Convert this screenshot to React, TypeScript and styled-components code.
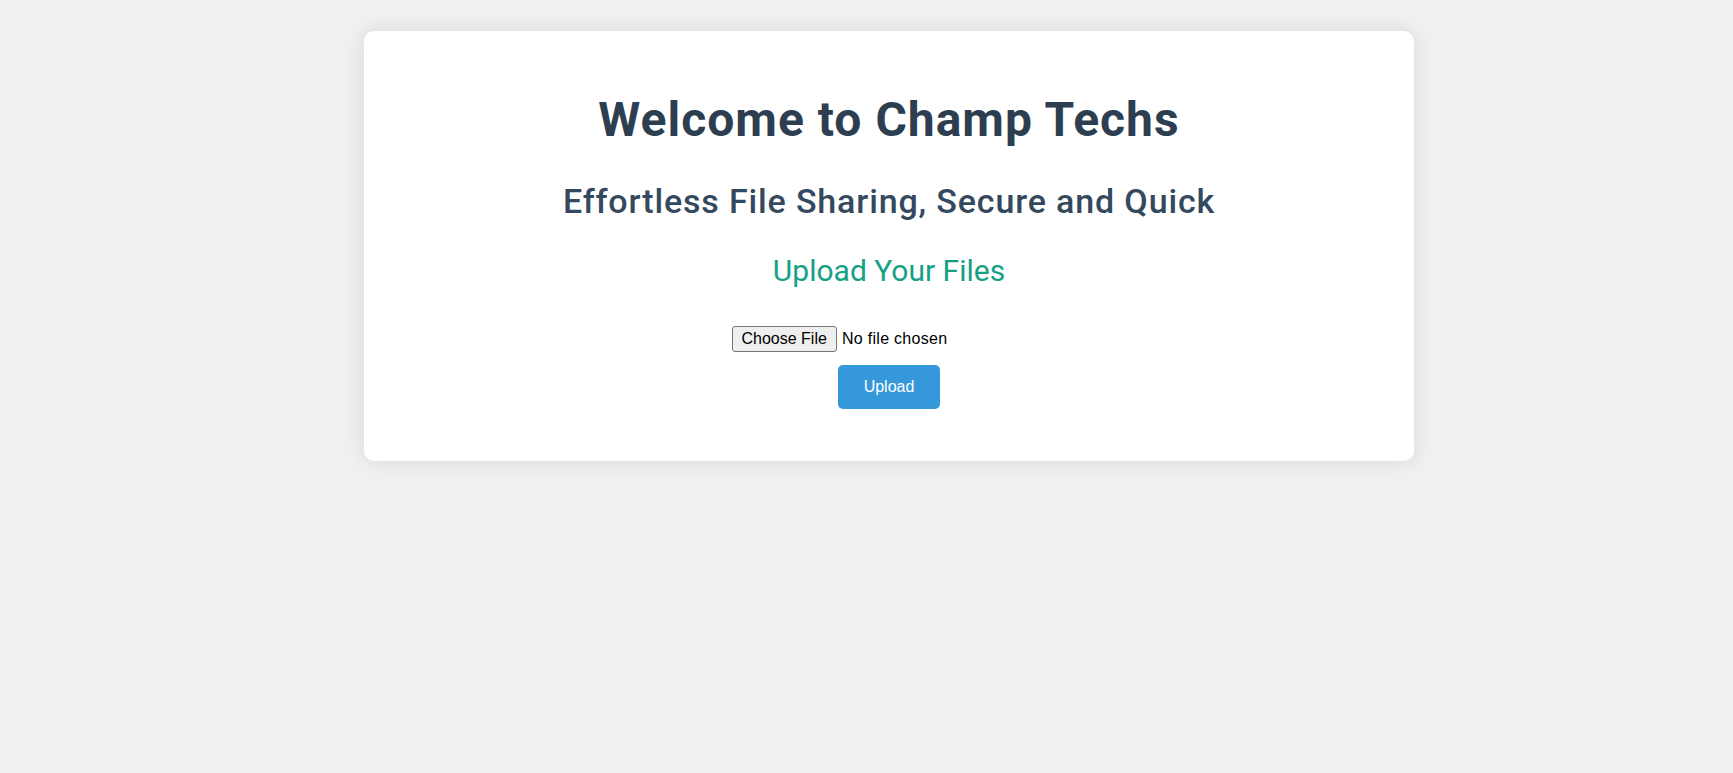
import React from "react";
import styled, { createGlobalStyle } from "styled-components";

const GlobalStyle = createGlobalStyle`
  html, body {
    margin: 0;
    padding: 0;
    background: #f0f0f0;
  }
  body {
    font-family: Roboto, "Liberation Sans", Arial, sans-serif;
  }
`;

const Page = styled.div`
  display: flex;
  justify-content: center;
  padding: 31px 0 0 45px;
  min-height: 773px;
  box-sizing: border-box;
`;

const Card = styled.main`
  width: 1050px;
  height: 430px;
  box-sizing: border-box;
  background: #ffffff;
  border-radius: 10px;
  box-shadow: 0 0 20px rgba(0, 0, 0, 0.1);
  padding: 60px 40px 0;
  display: flex;
  flex-direction: column;
  align-items: center;
  text-align: center;
`;

const Title = styled.h1`
  margin: 0;
  font-family: Roboto, "Liberation Sans", sans-serif;
  font-size: 48px;
  font-weight: 700;
  letter-spacing: 1px;
  color: #2c3e50;
  line-height: normal;
`;

const Subtitle = styled.h2`
  margin: 33px 0 0;
  font-family: Roboto, "Liberation Sans", sans-serif;
  font-size: 34px;
  font-weight: 500;
  letter-spacing: 0.85px;
  color: #34495e;
  line-height: normal;
`;

const SectionTitle = styled.h3`
  margin: 32px 0 0;
  font-family: Roboto, "Liberation Sans", sans-serif;
  font-size: 30px;
  font-weight: 400;
  color: #16a085;
  line-height: normal;
`;

const UploadForm = styled.form`
  margin-top: 38px;
  display: flex;
  flex-direction: column;
  align-items: center;
  gap: 13px;
`;

const FileInput = styled.input`
  font-family: "Liberation Sans", Arial, sans-serif;
  font-size: 16px;
  letter-spacing: 0.3px;
  color: #000;
  width: 315px;

  &::file-selector-button {
    font-family: "Liberation Sans", Arial, sans-serif;
    font-size: 16px;
    letter-spacing: 0;
    color: #000;
    background: #efefef;
    border: 1px solid #767676;
    border-radius: 3px;
    padding: 3px 9px;
    margin-right: 5px;
    line-height: 18px;
  }
`;

const UploadButton = styled.button`
  font-family: "Liberation Sans", Arial, sans-serif;
  font-size: 16px;
  color: #ffffff;
  background: #3498db;
  border: none;
  border-radius: 5px;
  padding: 13px 25px;
  width: 102px;
  line-height: 18px;
  cursor: pointer;
`;

export default function App() {
  return (
    <>
      <GlobalStyle />
      <Page>
        <Card>
          <Title>Welcome to Champ Techs</Title>
          <Subtitle>Effortless File Sharing, Secure and Quick</Subtitle>
          <SectionTitle>Upload Your Files</SectionTitle>
          <UploadForm onSubmit={(e) => e.preventDefault()}>
            <FileInput type="file" />
            <UploadButton type="submit">Upload</UploadButton>
          </UploadForm>
        </Card>
      </Page>
    </>
  );
}
